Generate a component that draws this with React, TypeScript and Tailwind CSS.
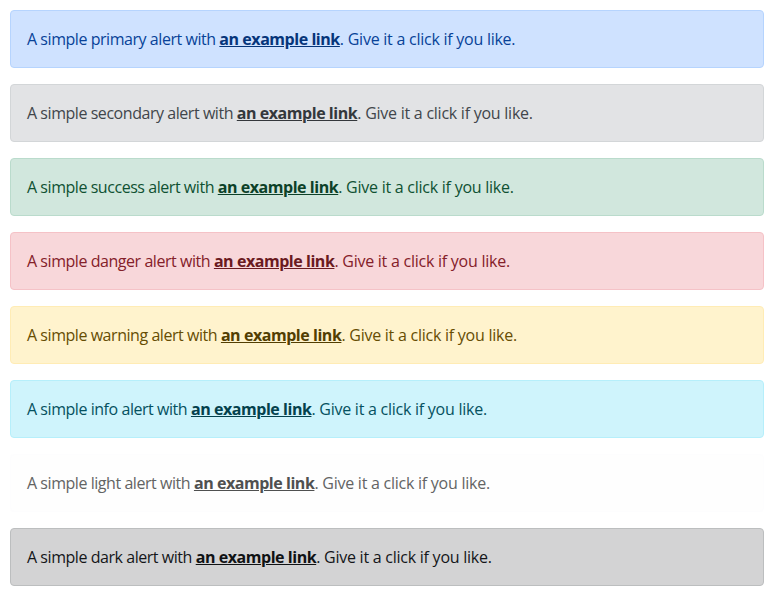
import React from "react";

const alerts = [
  { name: "primary", cls: "bg-[#cfe2ff] border-[#b6d4fe] text-[#084298]", link: "text-[#06357a]" },
  { name: "secondary", cls: "bg-[#e2e3e5] border-[#d3d6d8] text-[#41464b]", link: "text-[#34383c]" },
  { name: "success", cls: "bg-[#d1e7dd] border-[#badbcc] text-[#0f5132]", link: "text-[#0c4128]" },
  { name: "danger", cls: "bg-[#f8d7da] border-[#f5c2c7] text-[#842029]", link: "text-[#6a1a21]" },
  { name: "warning", cls: "bg-[#fff3cd] border-[#ffecb5] text-[#664d03]", link: "text-[#523e02]" },
  { name: "info", cls: "bg-[#cff4fc] border-[#b6effb] text-[#055160]", link: "text-[#04414d]" },
  { name: "light", cls: "bg-[#fefefe] border-[#fdfdfe] text-[#636464]", link: "text-[#4f5050]" },
  { name: "dark", cls: "bg-[#d3d3d4] border-[#bcbebf] text-[#141619]", link: "text-[#101214]" },
];

export default function App() {
  return (
    <div className="pl-[10px] pr-[9px] py-[10px] flex flex-col gap-4 bg-white" style={{ fontFamily: '"Open Sans", "Noto Sans", sans-serif' }}>
      {alerts.map((a) => (
        <div key={a.name} className={`border rounded-[4px] px-4 py-4 text-[16px] leading-6 tracking-[-0.45px] ${a.cls}`}>
          A simple {a.name} alert with{" "}
          <a href="#" className={`font-bold underline ${a.link}`}>an example link</a>
          <span className="tracking-[-0.25px]">. Give it a click if you like.</span>
        </div>
      ))}
    </div>
  );
}
